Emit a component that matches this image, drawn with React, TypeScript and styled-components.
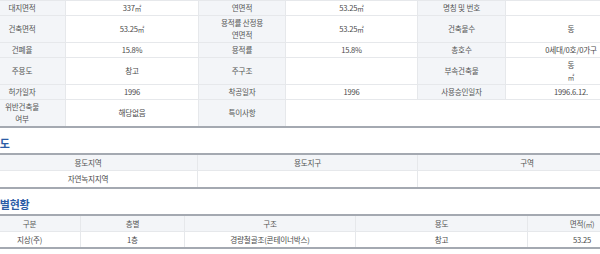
import React from 'react';
import styled, { createGlobalStyle } from 'styled-components';

const GlobalStyle = createGlobalStyle`
	html, body {
		margin: 0;
		padding: 0;
		background: #ffffff;
		overflow: hidden;
	}
	body {
		font-family: 'Noto Sans CJK KR', 'Noto Sans', sans-serif;
		color: #4a4a4a;
	}
`;

const Page = styled.div`
	width: 658px;
	margin-left: -22px;
`;

const SectionTitle = styled.h3`
	margin: 0;
	padding: 5px 0 0 12px;
	height: 20px;
	line-height: 20px;
	font-size: 11px;
	font-weight: 700;
	color: #2b5ca6;
	letter-spacing: -0.3px;
`;

const Table = styled.table<{ $top?: boolean }>`
	width: 100%;
	table-layout: fixed;
	border-collapse: collapse;
	border-top: ${({ $top }) => ($top ? '2px solid #a4a9b1' : '1px solid #e6e8eb')};
	border-bottom: 2px solid #a4a9b1;
	font-size: 7.6px;
	line-height: 12px;
	letter-spacing: -0.2px;
`;

const Th = styled.th`
	background: #f3f5f8;
	font-weight: 400;
	color: #555555;
	text-align: center;
	padding: 1px 2px;
	border: 1px solid #e6e8eb;
	border-top: none;
`;

const Td = styled.td<{ $pad?: string }>`
	background: #ffffff;
	color: #4a4a4a;
	text-align: center;
	padding: ${({ $pad }) => $pad || '1px 2px'};
	border: 1px solid #e6e8eb;
	border-top: none;
`;

const HeadCell = styled(Th)`
	padding: 2px 2px 1px;
`;

const Sq = styled.span`
	font-size: 6.5px;
`;

const m2 = <Sq>㎡</Sq>;

const overview = [
	['대지면적', <>337{m2}</>, '연면적', <>53.25{m2}</>, '명칭 및 번호', ''],
	['건축면적', <>53.25{m2}</>, <>용적률 산정용<br />연면적</>, <>53.25{m2}</>, '건축물수', '동'],
	['건폐율', '15.8%', '용적률', '15.8%', '총호수', '0세대/0호/0가구'],
	['주용도', '창고', '주구조', '', '부속건축물', <>동<br />{m2}</>],
	['허가일자', '1996', '착공일자', '1996', '사용승인일자', '1996.6.12.'],
];

const floors = [
	['지상(주)', '1층', '경량철골조(콘테이너박스)', '창고', '53.25'],
];

export default function App() {
	return (
		<Page>
			<GlobalStyle />
			<Table>
				<colgroup>
					<col style={{ width: 87 }} />
					<col style={{ width: 133 }} />
					<col style={{ width: 87 }} />
					<col style={{ width: 132 }} />
					<col style={{ width: 88 }} />
					<col style={{ width: 131 }} />
				</colgroup>
				<tbody>
					{overview.map((row, i) => (
						<tr key={i}>
							<Th>{row[0]}</Th>
							<Td>{row[1]}</Td>
							<Th>{row[2]}</Th>
							<Td>{row[3]}</Td>
							<Th>{row[4]}</Th>
							<Td>{row[5]}</Td>
						</tr>
					))}
					<tr>
						<Th>위반건축물<br />여부</Th>
						<Td>해당없음</Td>
						<Th>특이사항</Th>
						<Td colSpan={3}></Td>
					</tr>
				</tbody>
			</Table>

			<SectionTitle>용도</SectionTitle>
			<Table $top>
				<colgroup>
					<col style={{ width: 219 }} />
					<col style={{ width: 220 }} />
					<col style={{ width: 219 }} />
				</colgroup>
				<thead>
					<tr>
						<HeadCell>용도지역</HeadCell>
						<HeadCell>용도지구</HeadCell>
						<HeadCell>구역</HeadCell>
					</tr>
				</thead>
				<tbody>
					<tr>
						<Td $pad="2px 2px 2px">자연녹지지역</Td>
						<Td $pad="2px 2px 2px"></Td>
						<Td $pad="2px 2px 2px"></Td>
					</tr>
				</tbody>
			</Table>

			<SectionTitle>층별현황</SectionTitle>
			<Table $top>
				<colgroup>
					<col style={{ width: 102 }} />
					<col style={{ width: 104 }} />
					<col style={{ width: 171 }} />
					<col style={{ width: 172 }} />
					<col style={{ width: 109 }} />
				</colgroup>
				<thead>
					<tr>
						<HeadCell>구분</HeadCell>
						<HeadCell>층별</HeadCell>
						<HeadCell>구조</HeadCell>
						<HeadCell>용도</HeadCell>
						<HeadCell>면적({m2})</HeadCell>
					</tr>
				</thead>
				<tbody>
					{floors.map((row, i) => (
						<tr key={i}>
							{row.map((cell, j) => (
								<Td key={j} $pad="2px 2px 1px">{cell}</Td>
							))}
						</tr>
					))}
				</tbody>
			</Table>
		</Page>
	);
}
